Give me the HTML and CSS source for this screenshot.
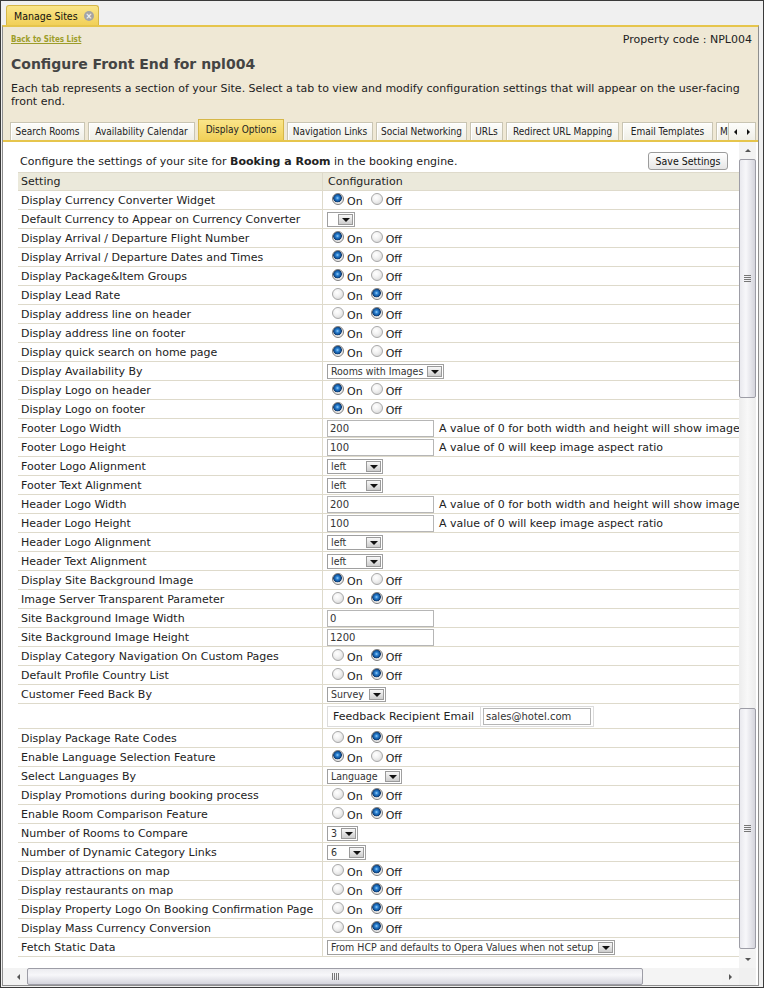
FILE: index.html
```html
<!DOCTYPE html>
<html>
<head>
<meta charset="utf-8">
<link rel="stylesheet" href="styles.css">
</head>
<body>
<div class="window">
  <div class="apptabs">
    <div class="apptab">Manage Sites <span class="close">&#215;</span></div>
  </div>
  <div class="panel">
    <div class="topline">
      <a class="back">Back to Sites List</a>
      <span class="propcode">Property code : NPL004</span>
    </div>
    <h1 class="title">Configure Front End for npl004</h1>
    <p class="desc">Each tab represents a section of your Site. Select a tab to view and modify configuration settings that will appear on the user-facing front end.</p>
    <div class="tabbar">
      <div class="tablist">
        <span class="tab t1">Search Rooms</span>
        <span class="tab t2">Availability Calendar</span>
        <span class="tab t3 active">Display Options</span>
        <span class="tab t4">Navigation Links</span>
        <span class="tab t5">Social Networking</span>
        <span class="tab t6">URLs</span>
        <span class="tab t7">Redirect URL Mapping</span>
        <span class="tab t8">Email Templates</span>
        <span class="tab t9">Miscellaneous</span>
      </div>
      <div class="tabnav"><span class="tri-l"></span><span class="tri-r"></span></div>
    </div>
    <div class="content">
      <div class="main">
        <div class="intro">
          <span>Configure the settings of your site for <b>Booking a Room</b> in the booking engine.</span>
          <span class="btn">Save Settings</span>
        </div>
        <table class="grid">
          <thead>
            <tr><th class="c1">Setting</th><th class="c2">Configuration</th></tr>
          </thead>
          <tbody>
            <tr><td class="c1">Display Currency Converter Widget</td><td class="c2"><span class="radio on"></span><span class="rl">On</span><span class="radio"></span><span class="rl">Off</span></td></tr>
            <tr><td class="c1">Default Currency to Appear on Currency Converter</td><td class="c2"><span class="sel w-empty"><span class="v"></span><span class="ar"></span></span></td></tr>
            <tr><td class="c1">Display Arrival / Departure Flight Number</td><td class="c2"><span class="radio on"></span><span class="rl">On</span><span class="radio"></span><span class="rl">Off</span></td></tr>
            <tr><td class="c1">Display Arrival / Departure Dates and Times</td><td class="c2"><span class="radio on"></span><span class="rl">On</span><span class="radio"></span><span class="rl">Off</span></td></tr>
            <tr><td class="c1">Display Package&amp;Item Groups</td><td class="c2"><span class="radio on"></span><span class="rl">On</span><span class="radio"></span><span class="rl">Off</span></td></tr>
            <tr><td class="c1">Display Lead Rate</td><td class="c2"><span class="radio"></span><span class="rl">On</span><span class="radio on"></span><span class="rl">Off</span></td></tr>
            <tr><td class="c1">Display address line on header</td><td class="c2"><span class="radio"></span><span class="rl">On</span><span class="radio on"></span><span class="rl">Off</span></td></tr>
            <tr><td class="c1">Display address line on footer</td><td class="c2"><span class="radio on"></span><span class="rl">On</span><span class="radio"></span><span class="rl">Off</span></td></tr>
            <tr><td class="c1">Display quick search on home page</td><td class="c2"><span class="radio on"></span><span class="rl">On</span><span class="radio"></span><span class="rl">Off</span></td></tr>
            <tr><td class="c1">Display Availability By</td><td class="c2"><span class="sel w-rooms"><span class="v">Rooms with Images</span><span class="ar"></span></span></td></tr>
            <tr><td class="c1">Display Logo on header</td><td class="c2"><span class="radio on"></span><span class="rl">On</span><span class="radio"></span><span class="rl">Off</span></td></tr>
            <tr><td class="c1">Display Logo on footer</td><td class="c2"><span class="radio on"></span><span class="rl">On</span><span class="radio"></span><span class="rl">Off</span></td></tr>
            <tr><td class="c1">Footer Logo Width</td><td class="c2"><span class="inp">200</span><span class="hint">A value of 0 for both width and height will show image in its original size</span></td></tr>
            <tr><td class="c1">Footer Logo Height</td><td class="c2"><span class="inp">100</span><span class="hint">A value of 0 will keep image aspect ratio</span></td></tr>
            <tr><td class="c1">Footer Logo Alignment</td><td class="c2"><span class="sel w-left"><span class="v">left</span><span class="ar"></span></span></td></tr>
            <tr><td class="c1">Footer Text Alignment</td><td class="c2"><span class="sel w-left"><span class="v">left</span><span class="ar"></span></span></td></tr>
            <tr><td class="c1">Header Logo Width</td><td class="c2"><span class="inp">200</span><span class="hint">A value of 0 for both width and height will show image in its original size</span></td></tr>
            <tr><td class="c1">Header Logo Height</td><td class="c2"><span class="inp">100</span><span class="hint">A value of 0 will keep image aspect ratio</span></td></tr>
            <tr><td class="c1">Header Logo Alignment</td><td class="c2"><span class="sel w-left"><span class="v">left</span><span class="ar"></span></span></td></tr>
            <tr><td class="c1">Header Text Alignment</td><td class="c2"><span class="sel w-left"><span class="v">left</span><span class="ar"></span></span></td></tr>
            <tr><td class="c1">Display Site Background Image</td><td class="c2"><span class="radio on"></span><span class="rl">On</span><span class="radio"></span><span class="rl">Off</span></td></tr>
            <tr><td class="c1">Image Server Transparent Parameter</td><td class="c2"><span class="radio"></span><span class="rl">On</span><span class="radio on"></span><span class="rl">Off</span></td></tr>
            <tr><td class="c1">Site Background Image Width</td><td class="c2"><span class="inp">0</span></td></tr>
            <tr><td class="c1">Site Background Image Height</td><td class="c2"><span class="inp">1200</span></td></tr>
            <tr><td class="c1">Display Category Navigation On Custom Pages</td><td class="c2"><span class="radio"></span><span class="rl">On</span><span class="radio on"></span><span class="rl">Off</span></td></tr>
            <tr><td class="c1">Default Profile Country List</td><td class="c2"><span class="radio"></span><span class="rl">On</span><span class="radio on"></span><span class="rl">Off</span></td></tr>
            <tr><td class="c1">Customer Feed Back By</td><td class="c2"><span class="sel w-survey"><span class="v">Survey</span><span class="ar"></span></span></td></tr>
            <tr class="tall"><td class="c1"></td><td class="c2"><span class="fb"><span class="fb-l">Feedback Recipient Email</span><span class="fb-i"><span class="inp w-mail">sales@hotel.com</span></span></span></td></tr>
            <tr><td class="c1">Display Package Rate Codes</td><td class="c2"><span class="radio"></span><span class="rl">On</span><span class="radio on"></span><span class="rl">Off</span></td></tr>
            <tr><td class="c1">Enable Language Selection Feature</td><td class="c2"><span class="radio on"></span><span class="rl">On</span><span class="radio"></span><span class="rl">Off</span></td></tr>
            <tr><td class="c1">Select Languages By</td><td class="c2"><span class="sel w-lang"><span class="v">Language</span><span class="ar"></span></span></td></tr>
            <tr><td class="c1">Display Promotions during booking process</td><td class="c2"><span class="radio"></span><span class="rl">On</span><span class="radio on"></span><span class="rl">Off</span></td></tr>
            <tr><td class="c1">Enable Room Comparison Feature</td><td class="c2"><span class="radio"></span><span class="rl">On</span><span class="radio on"></span><span class="rl">Off</span></td></tr>
            <tr><td class="c1">Number of Rooms to Compare</td><td class="c2"><span class="sel w-3"><span class="v">3</span><span class="ar"></span></span></td></tr>
            <tr><td class="c1">Number of Dynamic Category Links</td><td class="c2"><span class="sel w-6"><span class="v">6</span><span class="ar"></span></span></td></tr>
            <tr><td class="c1">Display attractions on map</td><td class="c2"><span class="radio"></span><span class="rl">On</span><span class="radio on"></span><span class="rl">Off</span></td></tr>
            <tr><td class="c1">Display restaurants on map</td><td class="c2"><span class="radio"></span><span class="rl">On</span><span class="radio on"></span><span class="rl">Off</span></td></tr>
            <tr><td class="c1">Display Property Logo On Booking Confirmation Page</td><td class="c2"><span class="radio"></span><span class="rl">On</span><span class="radio on"></span><span class="rl">Off</span></td></tr>
            <tr><td class="c1">Display Mass Currency Conversion</td><td class="c2"><span class="radio"></span><span class="rl">On</span><span class="radio on"></span><span class="rl">Off</span></td></tr>
            <tr><td class="c1">Fetch Static Data</td><td class="c2"><span class="sel w-fetch"><span class="v">From HCP and defaults to Opera Values when not setup</span><span class="ar"></span></span></td></tr>
          </tbody>
        </table>
      </div>
      <div class="vscroll">
        <span class="sb-btn"><span class="tri-u"></span></span>
        <span class="thumb v1"><span class="grip-v"></span></span>
        <span class="track v"></span>
        <span class="thumb v2"><span class="grip-v"></span></span>
        <span class="track vs"></span>
        <span class="sb-btn"><span class="tri-d"></span></span>
      </div>
      <div class="hscroll">
        <span class="sb-btn h"><span class="tri-ls"></span></span>
        <span class="thumb h"><span class="grip-h"></span></span>
        <span class="track h"></span>
        <span class="sb-btn h"><span class="tri-rs"></span></span>
      </div>
      <div class="corner"></div>
    </div>
  </div>
</div>
</body>
</html>
```

FILE: styles.css
```css
* { box-sizing: border-box; }
html, body { margin: 0; padding: 0; }
body {
  font-family: "DejaVu Sans", Verdana, sans-serif;
  font-size: 11px;
  color: #222;
  background: #f0f0f0;
}
.window {
  width: 764px;
  height: 988px;
  border: 1px solid #3a3a3a;
  background: #f0f0f0;
  display: flex;
  flex-direction: column;
  overflow: hidden;
}
.apptabs {
  height: 24px;
  flex: none;
  display: flex;
  align-items: flex-end;
  padding-left: 5px;
}
.apptab {
  height: 20px;
  width: 93px;
  display: flex;
  align-items: center;
  gap: 5px;
  padding: 0 4px 0 7px;
  background: linear-gradient(#fae58a, #f1d058);
  border: 1px solid #d6b748;
  border-bottom: none;
  border-radius: 3px 3px 0 0;
  font-family: "DejaVu Sans Condensed", "DejaVu Sans", sans-serif;
  font-size: 10.5px;
  color: #111;
}
.close {
  width: 10px;
  height: 10px;
  border-radius: 50%;
  background: #a4a4a4;
  color: #f4f4f4;
  font-size: 9px;
  line-height: 10px;
  text-align: center;
  font-weight: bold;
  margin-left: auto;
}
.panel {
  flex: 1;
  display: flex;
  flex-direction: column;
  margin: 0 4px 1px 1px;
  border-top: 2px solid #e6c54c;
  border-left: 1px solid #8e8e8e;
  border-right: 1px solid #8e8e8e;
  border-bottom: 1px solid #8e8e8e;
  background: #efe8d5;
  min-height: 0;
}
.topline {
  display: flex;
  justify-content: space-between;
  align-items: center;
  height: 13px;
  margin-top: 6px;
  padding: 0 6px 0 8px;
}
.back {
  font-family: "DejaVu Sans Condensed", "DejaVu Sans", sans-serif;
  font-size: 8px;
  font-weight: bold;
  color: #9d9d2a;
  text-decoration: underline;
}
.propcode { font-size: 11px; color: #222; }
.title {
  margin: 9px 0 0 8px;
  font-size: 14px;
  line-height: 18px;
  font-weight: bold;
  color: #444;
}
.desc {
  margin: 9px 4px 0 8px;
  line-height: 13px;
  color: #222;
}
.tabbar {
  display: flex;
  align-items: flex-end;
  height: 22px;
  margin-top: 10px;
  padding-left: 7px;
}
.tablist {
  flex: 1;
  display: flex;
  align-items: flex-end;
  gap: 3px;
  overflow: hidden;
  min-width: 0;
}
.tab {
  flex: none;
  height: 18px;
  padding: 0;
  display: flex;
  align-items: center;
  justify-content: center;
  white-space: nowrap;
  overflow: hidden;
  font-family: "DejaVu Sans Condensed", "DejaVu Sans", sans-serif;
  font-size: 10px;
  color: #222;
  background: linear-gradient(#fdfdfb, #efeee6);
  border: 1px solid #c9c5b3;
  border-bottom: none;
  box-shadow: inset 1px 1px 0 #fff;
}
.tab.active {
  height: 21px;
  padding-bottom: 2px;
  background: linear-gradient(#fae58a, #f1d058);
  border-color: #d6b748;
  box-shadow: none;
}
.t1 { width: 75px; }
.t2 { width: 107px; }
.t3 { width: 86px; }
.t4 { width: 86px; }
.t5 { width: 91px; }
.t6 { width: 33px; }
.t7 { width: 113px; }
.t8 { width: 91px; }
.t9 { width: 80px; justify-content: flex-start; padding-left: 3px; }
.tabnav {
  flex: none;
  width: 28px;
  height: 18px;
  display: flex;
  align-items: center;
  justify-content: space-around;
  background: linear-gradient(#fdfdfb, #efeee6);
  border: 1px solid #c9c5b3;
  border-bottom: none;
  margin-right: 2px;
}
.tri-l { width: 0; height: 0; border-top: 3px solid transparent; border-bottom: 3px solid transparent; border-right: 3px solid #111; }
.tri-r { width: 0; height: 0; border-top: 3px solid transparent; border-bottom: 3px solid transparent; border-left: 3px solid #111; }
.content {
  flex: 1;
  min-height: 0;
  display: grid;
  grid-template-columns: 736px 17px;
  grid-template-rows: 1fr 17px;
  border-top: 2px solid #e6c54c;
  background: #fff;
  padding-right: 2px;
}
.main {
  overflow: hidden;
  min-height: 0;
}
.intro {
  display: flex;
  justify-content: space-between;
  align-items: center;
  margin-top: 10px;
  padding: 0 11px 0 17px;
  height: 18px;
}
.btn {
  width: 80px;
  height: 18px;
  display: flex;
  align-items: center;
  justify-content: center;
  font-family: "DejaVu Sans Condensed", "DejaVu Sans", sans-serif;
  font-size: 10.5px;
  color: #111;
  border: 1px solid #9c9c9c;
  border-radius: 3px;
  background: linear-gradient(#ffffff, #e6e6e6);
}
.grid {
  margin: 2px 0 0 15px;
  border-collapse: separate;
  border-spacing: 0;
  table-layout: fixed;
  width: 900px;
}
.grid th, .grid td {
  height: 19px;
  padding: 0;
  border-bottom: 1px solid #dedacb;
  text-align: left;
  font-weight: normal;
  white-space: nowrap;
  overflow: hidden;
  vertical-align: middle;
}
.grid th {
  background: #ebe9db;
  border-top: 1px solid #dedacb;
}
.grid .c1 { width: 304px; padding-left: 3px; }
.grid .c2 { padding-left: 4px; border-left: 1px solid #dedacb; }
.grid th.c2 { padding-left: 5px; }
.grid tr.tall td { height: 25px; }
.radio {
  display: inline-block;
  width: 12px;
  height: 12px;
  margin: 0 3px 0 5px;
  border-radius: 50%;
  border: 1px solid #a8a8a8;
  background: radial-gradient(circle at 40% 35%, #ffffff 0, #f2f2f2 40%, #cfcfcf 100%);
  vertical-align: -2px;
}
.radio.on {
  border-color: #7c7c7c;
  background: radial-gradient(circle at 45% 40%, #9fd2f8 0, #2f86d6 1.5px, #0d4d92 3.5px, #11386a 4px, #d8d8d8 4.6px, #f6f6f6 6px);
}
.rl { display: inline-block; margin-right: 3px; vertical-align: -2px; }
.sel {
  display: inline-flex;
  height: 15px;
  border: 1px solid #a0a0a0;
  background: #fff;
  vertical-align: middle;
}
.sel .v {
  flex: 1;
  padding: 0 2px 0 3px;
  font-family: "DejaVu Sans Condensed", "DejaVu Sans", sans-serif;
  font-size: 10.5px;
  line-height: 13px;
  color: #333;
  white-space: nowrap;
  overflow: hidden;
}
.sel .ar {
  flex: none;
  width: 15px;
  margin: 1px;
  border: 1px solid #9a9a9a;
  background: linear-gradient(#f8f8f8, #cdcdcd);
  display: flex;
  align-items: center;
  justify-content: center;
}
.sel .ar::after {
  content: "";
  width: 0; height: 0;
  border-left: 4px solid transparent;
  border-right: 4px solid transparent;
  border-top: 4px solid #111;
  margin-top: 1px;
}
.w-empty { width: 28px; }
.w-rooms { width: 117px; }
.w-left { width: 56px; }
.w-survey { width: 59px; }
.w-lang { width: 75px; }
.w-3 { width: 31px; }
.w-6 { width: 39px; }
.w-fetch { width: 288px; }
.inp {
  display: inline-block;
  width: 107px;
  height: 17px;
  border: 1px solid #b6b6b6;
  padding: 0 2px;
  font-size: 10px;
  line-height: 15px;
  color: #333;
  vertical-align: middle;
  background: #fff;
}
.hint { margin-left: 5px; vertical-align: middle; }
.fb {
  display: inline-flex;
  align-items: stretch;
  height: 21px;
  border: 1px solid #dcdcdc;
  vertical-align: middle;
}
.fb-l {
  display: flex;
  align-items: center;
  padding: 0 6px 0 5px;
  border-right: 1px solid #dcdcdc;
}
.fb-i {
  display: flex;
  align-items: center;
  padding: 0 2px 0 2px;
}
.inp.w-mail { width: 108px; }
.vscroll {
  grid-column: 2;
  grid-row: 1;
  display: flex;
  flex-direction: column;
  background: #f4f4f4;
  min-height: 0;
}
.sb-btn {
  flex: none;
  height: 17px;
  display: flex;
  align-items: center;
  justify-content: center;
  background: #f3f3f3;
}
.sb-btn.h { width: 17px; height: 17px; }
.tri-u { width: 0; height: 0; border-left: 3px solid transparent; border-right: 3px solid transparent; border-bottom: 3px solid #555; }
.tri-d { width: 0; height: 0; border-left: 3px solid transparent; border-right: 3px solid transparent; border-top: 3px solid #555; }
.tri-ls { width: 0; height: 0; border-top: 3px solid transparent; border-bottom: 3px solid transparent; border-right: 3px solid #555; }
.tri-rs { width: 0; height: 0; border-top: 3px solid transparent; border-bottom: 3px solid transparent; border-left: 3px solid #555; }
.thumb {
  flex: none;
  display: flex;
  align-items: center;
  justify-content: center;
  border: 1px solid #9d9da6;
  border-radius: 2px;
}
.thumb.v1, .thumb.v2 {
  background: linear-gradient(90deg, #e9e9ee, #f7f7fa 40%, #d4d4dc);
}
.thumb.v1 { height: 239px; }
.thumb.v2 { height: 241px; }
.track.v { flex: 1; background: linear-gradient(90deg, #ececec, #f8f8f8 50%, #ececec); }
.track.vs { height: 2px; flex: none; }
.grip-v {
  width: 7px;
  height: 7px;
  background: repeating-linear-gradient(#777 0 1px, transparent 1px 2px);
}
.hscroll {
  grid-column: 1;
  grid-row: 2;
  display: flex;
  align-items: stretch;
  background: #f4f4f4;
  padding-left: 7px;
}
.thumb.h {
  width: 616px;
  background: linear-gradient(#ececf0, #f7f7fa 40%, #d4d4dc);
}
.grip-h {
  width: 7px;
  height: 7px;
  background: repeating-linear-gradient(90deg, #777 0 1px, transparent 1px 2px);
}
.track.h { flex: 1; }
.corner {
  grid-column: 2;
  grid-row: 2;
  background: #f0f0f0;
}
```
